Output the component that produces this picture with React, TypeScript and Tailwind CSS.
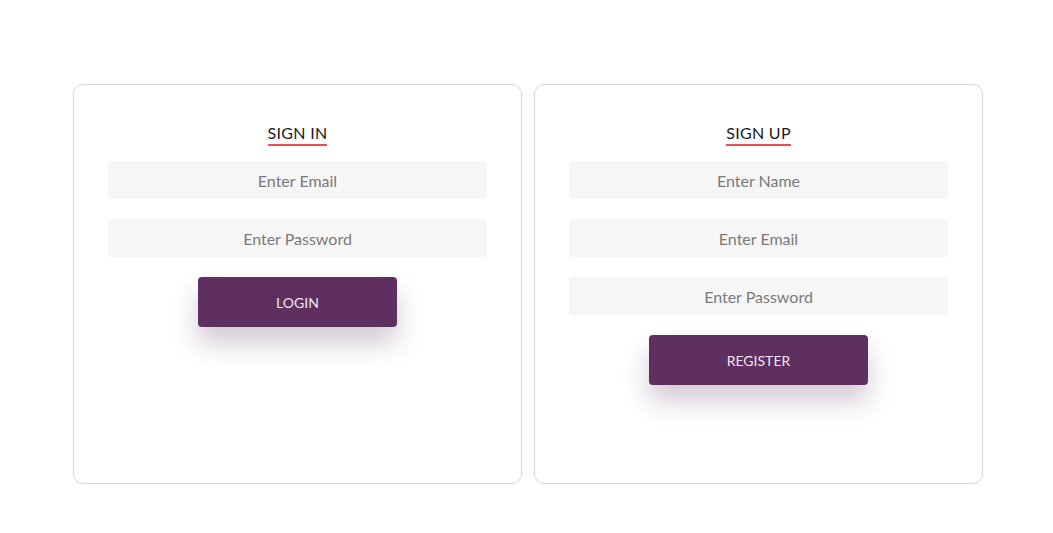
import React from "react";

const font = { fontFamily: "Lato, 'Open Sans', sans-serif" };

function Field({ placeholder }: { placeholder: string }) {
  return (
    <input
      placeholder={placeholder}
      className="w-full h-[38px] rounded-[3px] bg-[#f6f6f6] text-center text-[16px] text-[#555] placeholder:text-[#7a7a7a] outline-none"
    />
  );
}

function Card({
  title,
  fields,
  button,
}: {
  title: string;
  fields: string[];
  button: string;
}) {
  return (
    <div className="w-[449px] h-[400px] rounded-[10px] border border-[#d6d6d6] bg-white px-[34px] pt-[38px] flex flex-col items-center">
      <h2 className="text-[16px] tracking-[0.3px] text-[#1a1a1a] leading-[20px] border-b-2 border-[#e8505b] pb-[1px]">
        {title}
      </h2>
      <div className="w-full mt-[15px] flex flex-col gap-[20px]">
        {fields.map((f) => (
          <Field key={f} placeholder={f} />
        ))}
      </div>
      <button className="mt-[20px] h-[50px] px-[78px] rounded-[4px] bg-[#5e2f5f] text-[14px] text-[#f3e6f3] shadow-[0_16px_26px_rgba(70,35,75,0.24)]">
        {button}
      </button>
    </div>
  );
}

export default function App() {
  return (
    <div className="min-h-[533px] bg-white flex justify-center pt-[84px] pl-[3px]" style={font}>
      <div className="flex gap-[12px]">
        <Card title="SIGN IN" fields={["Enter Email", "Enter Password"]} button="LOGIN" />
        <Card
          title="SIGN UP"
          fields={["Enter Name", "Enter Email", "Enter Password"]}
          button="REGISTER"
        />
      </div>
    </div>
  );
}
